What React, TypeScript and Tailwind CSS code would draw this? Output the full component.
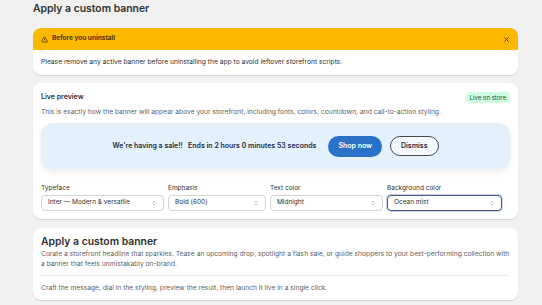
import { AlertTriangle, X, ChevronsUpDown } from 'lucide-react';

const selects = [
  { label: 'Typeface', value: 'Inter — Modern & versatile', w: 'w-[123px]' },
  { label: 'Emphasis', value: 'Bold (600)', w: 'w-[98px]' },
  { label: 'Text color', value: 'Midnight', w: 'w-[113px]' },
  { label: 'Background color', value: 'Ocean mist', w: 'w-[115px]', active: true },
];

export default function App() {
  return (
    <div className="w-[542px] h-[305px] overflow-hidden bg-[#f1f1f1] text-[#303030]" style={{ fontFamily: 'Inter, "Noto Sans", sans-serif' }}>
      <div className="ml-[33px] w-[485px] pt-[2px]">
        <h1 className="text-[10.4px] leading-[14px] font-semibold text-[#303030]">Apply a custom banner</h1>

        {/* warning */}
        <div className="mt-[12px] rounded-[8px] overflow-hidden bg-white shadow-[0_1px_1px_rgba(0,0,0,0.12)]">
          <div className="h-[22px] bg-[#fcb900] flex items-center px-[8px] gap-[4px]">
            <AlertTriangle className="w-[7px] h-[7px] text-[#4f3500]" strokeWidth={2.5} />
            <span className="text-[6.5px] font-bold text-[#4f3500]">Before you uninstall</span>
            <X className="ml-auto w-[7px] h-[7px] text-[#4f3500]" strokeWidth={3} />
          </div>
          <div className="h-[25px] flex items-center px-[8px] text-[6.7px]">
            Please remove any active banner before uninstalling the app to avoid leftover storefront scripts.
          </div>
        </div>

        {/* live preview */}
        <div className="mt-[8px] rounded-[8px] bg-white shadow-[0_1px_1px_rgba(0,0,0,0.12)] px-[8px] pt-[8px] pb-[8px]">
          <div className="flex items-center justify-between h-[12px]">
            <span className="text-[7px] font-semibold">Live preview</span>
            <span className="rounded-[4px] bg-[#cdfee1] text-[#0c5132] text-[6px] px-[4px] leading-[11px]">Live on store</span>
          </div>
          <p className="mt-[4px] text-[6.7px] text-[#616161] leading-[10px]">
            This is exactly how the banner will appear above your storefront, including fonts, colors, countdown, and call-to-action styling.
          </p>
          <div className="mt-[6px] h-[46px] rounded-[12px] bg-[#e3f1fd] shadow-[0_3px_6px_rgba(0,0,0,0.08)] flex items-center justify-center gap-[8px]">
            <span className="text-[7px] font-semibold text-[#1f2a44]">We're having a sale!!&nbsp;&nbsp; Ends in 2 hours 0 minutes 53 seconds</span>
            <span className="ml-[4px] h-[21px] px-[10px] rounded-full bg-[#2a72c8] text-white text-[7px] font-semibold flex items-center">Shop now</span>
            <span className="h-[20px] px-[10px] rounded-full border border-[#4a4a4a] bg-white/60 text-[#1f2a44] text-[7px] font-semibold flex items-center">Dismiss</span>
          </div>
          <div className="mt-[14px] flex gap-[4px]">
            {selects.map((s) => (
              <div key={s.label} className={s.w}>
                <div className="text-[6.5px] leading-[10px] text-[#303030]">{s.label}</div>
                <div
                  className={`mt-[2px] h-[16px] rounded-[4px] bg-white flex items-center px-[6px] text-[6.5px] ${
                    s.active ? 'border-[1.5px] border-[#4a5a8c] shadow-[0_0_0_1px_#c8d2ea]' : 'border border-[#d4d4d4]'
                  }`}
                >
                  <span>{s.value}</span>
                  <ChevronsUpDown className="ml-auto w-[6px] h-[6px] text-[#8a8a8a]" />
                </div>
              </div>
            ))}
          </div>
        </div>

        {/* about */}
        <div className="mt-[9px] rounded-[8px] bg-white shadow-[0_1px_1px_rgba(0,0,0,0.12)] px-[8px] pt-[7px] pb-[7px]">
          <h2 className="text-[10.4px] leading-[14px] font-semibold">Apply a custom banner</h2>
          <p className="text-[6.7px] leading-[10px] text-[#616161]">
            Curate a storefront headline that sparkles. Tease an upcoming drop, spotlight a flash sale, or guide shoppers to your best-performing collection with a banner that feels unmistakably on-brand.
          </p>
          <div className="mt-[6px] border-t border-[#ebebeb]" />
          <p className="mt-[7px] text-[6.7px] leading-[10px] text-[#616161]">
            Craft the message, dial in the styling, preview the result, then launch it live in a single click.
          </p>
        </div>
      </div>
    </div>
  );
}
